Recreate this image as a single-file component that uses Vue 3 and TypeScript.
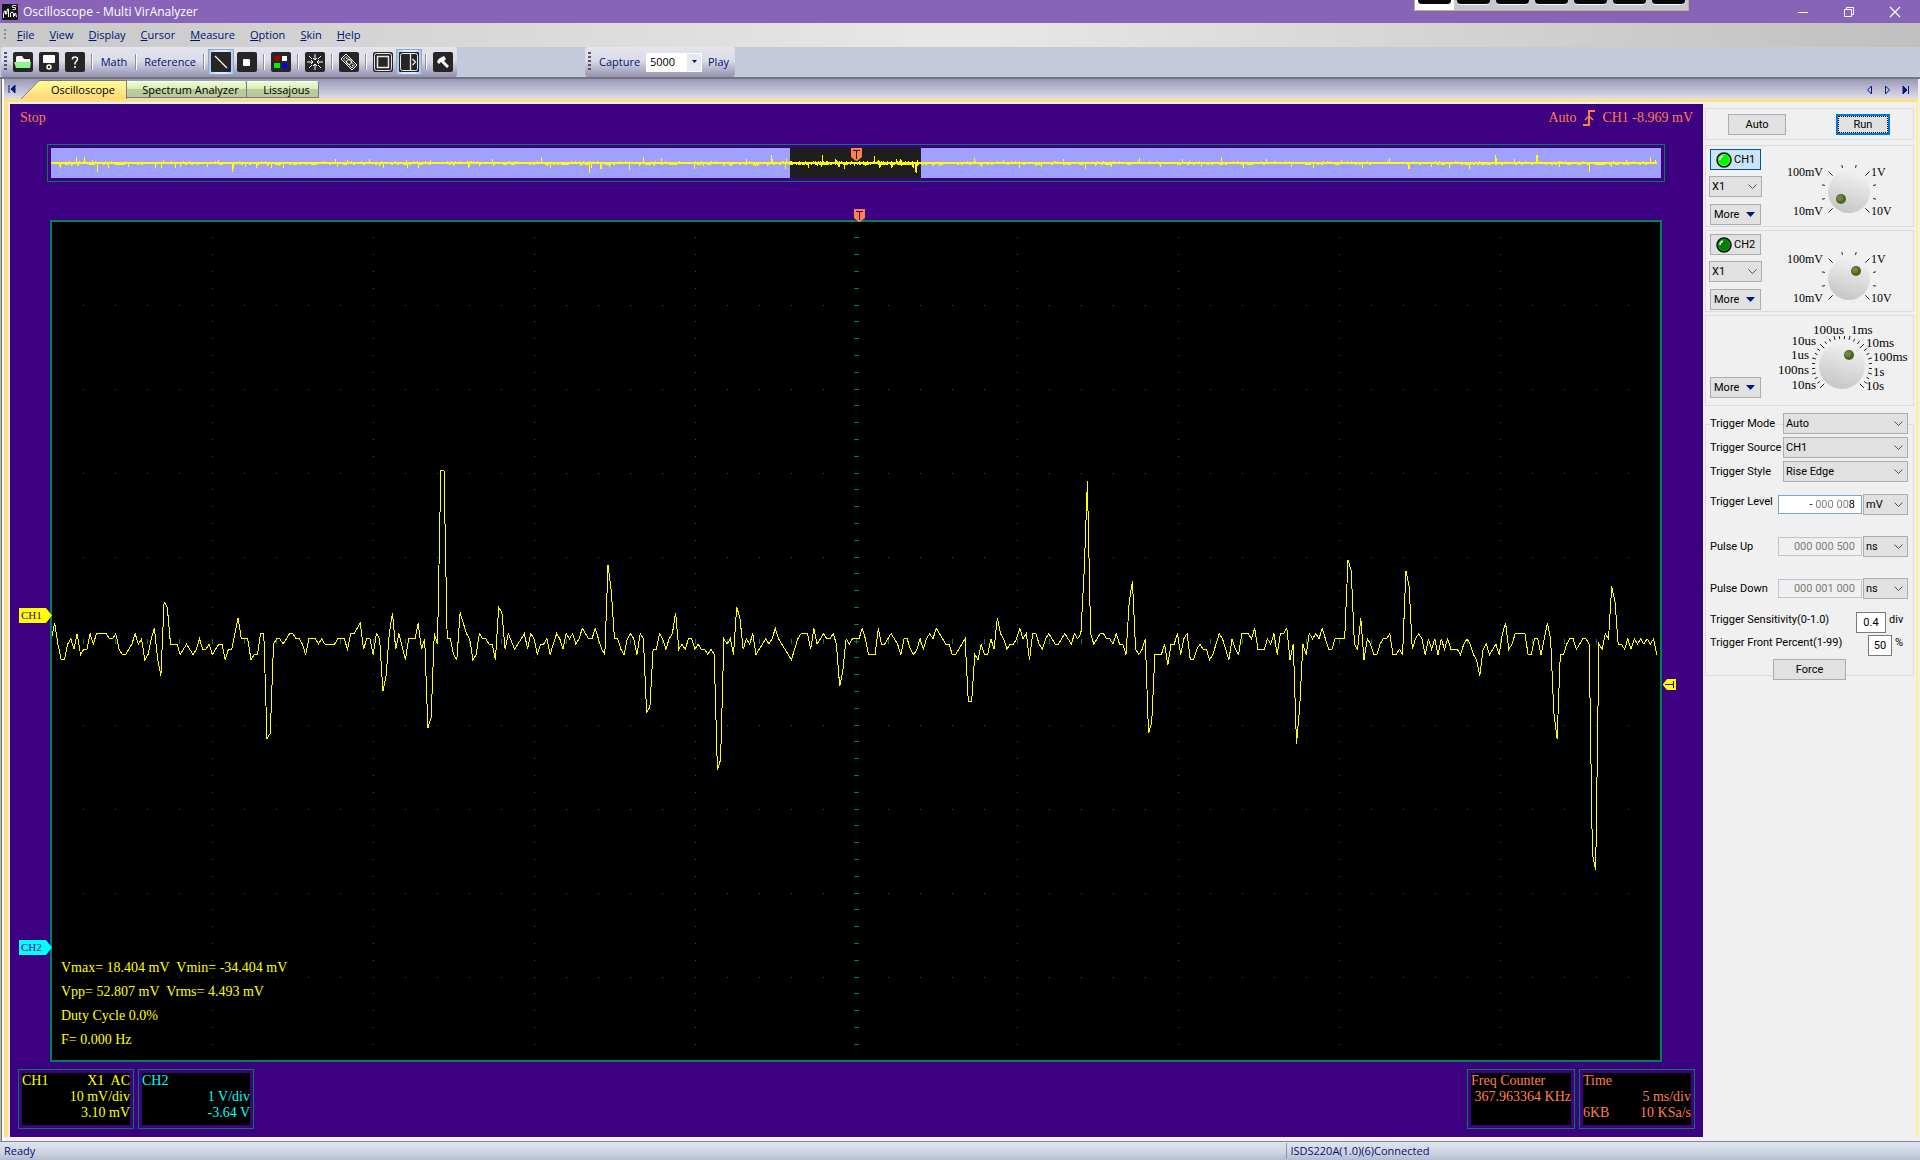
<script setup lang="ts">
import { ref } from 'vue'

const menus = ['File', 'View', 'Display', 'Cursor', 'Measure', 'Option', 'Skin', 'Help']
const dockCells = [0, 1, 2, 3, 4, 5, 6]

const capture = ref('5000')
const probe1 = ref('X1')
const probe2 = ref('X1')
const triggerMode = ref('Auto')
const triggerSource = ref('CH1')
const triggerStyle = ref('Rise Edge')
const triggerLevel = ref('- 000 008')
const levelUnit = ref('mV')
const pulseUp = ref('000 000 500')
const pulseUpUnit = ref('ns')
const pulseDown = ref('000 001 000')
const pulseDownUnit = ref('ns')
const sensitivity = ref('0.4')
const frontPercent = ref('50')

// Captured samples: "index,level" pairs, the level counted in ADC steps from the rest line.
const samples = `0,0 1,3 2,-1 3,-4 4,-4 5,-1 6,0 7,-2 8,1 9,-3 10,-2 11,-2 12,1 13,-1 14,1 17,1 18,0 19,0 20,1 21,-2 22,-3 23,-3
24,-2 25,-1 26,1 27,-1 28,0 29,-4 30,-3 31,0 32,2 33,-4 34,-7 35,7 36,6 37,-1 39,-1 40,-3 42,-1 44,-3 45,-2 46,0 47,-2 48,-2
49,-1 50,-3 52,-1 53,-1 54,-4 55,-2 56,-2 57,1 58,4 59,0 61,0 62,-4 63,-3 64,-3 65,1 66,1 67,-19 68,-18 69,-1 70,0 71,0
72,-1 74,1 75,1 76,0 77,0 78,-1 79,-3 80,0 82,0 83,-1 84,0 85,-1 88,-1 89,0 91,0 92,-2 93,1 94,1 96,3 97,-2 98,0 99,0
100,-3 101,1 102,0 103,-10 104,-7 105,1 106,5 107,-2 108,1 110,-4 111,0 113,0 114,3 115,-2 116,0 117,-17 118,-15 119,1
120,-1 121,32 122,32 123,0 124,0 125,-3 126,-4 127,5 129,1 130,0 131,-4 132,-3 133,1 134,0 135,0 136,-1 137,-1 138,-4 139,6
140,5 141,-2 142,1 144,-2 147,1 148,-2 149,1 150,0 151,-3 152,-1 153,-1 154,0 155,-3 157,1 158,0 159,-2 160,1 161,0 162,1
163,-1 164,0 165,2 167,0 168,0 169,2 171,-2 172,-3 173,14 174,9 175,0 176,0 177,-2 178,-3 179,0 180,1 181,0 182,-3 183,1
184,0 185,-14 186,-13 187,-2 188,-2 189,1 190,0 191,-2 192,0 193,1 194,5 195,-2 196,-1 197,-2 198,0 199,0 200,-2 201,-1
202,-2 203,-2 204,-3 205,-2 206,-3 207,-25 208,-23 209,0 210,-1 211,0 212,-3 213,6 214,4 215,-2 216,0 217,-1 218,1 219,-3
220,-2 222,0 223,-1 224,0 225,2 226,0 227,-1 228,-2 230,-4 231,-2 232,0 233,1 235,1 236,-2 237,2 238,-1 240,1 241,0 242,0
243,1 244,-1 245,-9 246,-6 247,0 248,-1 249,0 251,0 252,2 253,0 254,-3 256,-3 257,2 258,-1 259,-1 260,0 261,1 263,-1 264,-3
265,0 266,0 267,-2 268,-3 269,-2 270,0 271,-2 272,0 273,1 274,0 275,2 277,0 278,-1 279,-1 280,-3 281,-3 282,-2 284,0
285,-12 286,-12 287,-3 288,-4 289,-1 290,-3 291,-3 292,0 293,-2 294,4 295,1 296,0 297,-2 298,-1 299,-1 300,0 301,2 302,0
303,1 304,-4 305,1 306,1 307,-1 308,-2 309,0 310,1 312,-1 313,-1 315,1 317,-1 318,1 319,0 320,1 321,13 322,30 323,1 324,-1
326,1 327,1 328,0 329,0 330,-1 331,1 332,-1 333,-1 334,-3 335,7 336,11 337,-2 338,-3 339,-2 340,0 341,-18 342,-16 343,-3
345,-3 346,-1 347,-5 348,-1 349,-1 350,1 351,-3 352,0 353,1 354,-4 355,-4 356,-2 357,-1 358,-2 359,-2 360,-4 361,-3 362,-1
363,1 364,0 366,-4 367,0 368,-2 369,-3 370,1 372,1 373,0 374,2 375,-2 377,-2 378,0 379,-1 380,1 381,-3 382,1 383,1 384,2
385,-4 386,-1 387,-20 388,-13 389,-1 390,-3 391,1 392,0 393,1 394,0 395,2 396,0 397,-2 398,-2 399,0 402,0 403,15 404,13
405,-1 406,-2 407,4 408,-4 409,0 410,-1 411,-3 412,-3 413,-1 414,0 415,0 416,1 417,-3 418,-3 419,-2 420,-3 421,13 422,10
423,-2 424,0 425,1 426,0 427,-3 428,0 429,-2 430,0 431,-3 432,0 433,-2 434,0 435,-2 437,-2 438,-3 439,-1 440,0 441,-1
442,-3 443,-4 444,-7 445,-2 446,-1 447,-3 449,-1 450,-3 451,1 452,3 453,-2 454,-1 455,1 458,1 459,-3 460,-3 461,0 462,0
463,-3 464,0 465,3 466,0 467,-14 468,-19 469,-3 470,-3 471,-1 472,0 473,0 474,-2 476,0 477,0 478,-1 479,-41 480,-44 481,-1
482,-2 483,1 484,0 485,10 486,7 487,-1 488,-1 489,-2 490,0 491,-2 492,0 493,-1 494,0 495,-1 496,0 497,-1 498,0 499,-3`
  .split(/\s+/)
  .map((pair) => pair.split(',').map(Number) as [number, number])

const tracePoints = samples
  .map(([i, level]) => `${(i * 3.217 - 0.5).toFixed(1)},${(416.8 - level * 5.25).toFixed(1)}`)
  .join(' ')

// Graticule: ten by ten divisions, five minor marks in each.
function buildGrid() {
  let dots = ''
  let ticks = ''
  for (let col = 1; col < 10; col++) {
    for (let n = 1; n < 50; n++) {
      const x = 161 * col - 1
      const y = Math.floor(n * 16.8) - 1
      if (col === 5) ticks += `M${x - 2} ${y}h5v1h-5z`
      else dots += `M${x} ${y}h1v1h-1z`
    }
  }
  for (let row = 1; row < 10; row++) {
    for (let n = 1; n < 50; n++) {
      const x = Math.floor(n * 32.2) - 1
      const y = 84 * row - 1
      if (row === 5) ticks += `M${x} ${y - 2}h1v5h-1z`
      else dots += `M${x} ${y}h1v1h-1z`
    }
  }
  return { dots, ticks }
}
const grid = buildGrid()

// Whole-memory overview: peaks outside the window, as [x, height]; negative goes down.
const peaks: [number, number][] = [
  [9, -4], [25, 5], [33, 5], [41, 2], [46, -8], [57, -4], [77, -3], [104, -4], [110, -4], [112, 2], [124, -4], [129, -3],
  [156, -3], [167, 2], [181, -8], [182, -5], [194, -3], [205, -4], [220, -4], [232, -4], [284, 3], [286, -3], [296, 2],
  [318, 3], [332, -4], [355, 2], [356, -4], [367, -4], [379, 2], [417, -4], [418, -3], [441, 3], [490, 5], [499, -4], [529, -2],
  [538, -9], [540, -4], [549, -5], [550, -5], [558, -3], [578, -6], [592, 5], [603, -2], [610, 4], [643, -5], [652, -2], [695, 3],
  [704, -2], [720, 7], [721, 3], [734, -5], [735, 3], [881, -2], [923, 4], [930, -3], [952, 2], [968, -4], [990, -3], [1012, 3],
  [1034, -5], [1060, -3], [1088, 4], [1109, -3], [1131, 3], [1150, -3], [1170, 5], [1192, -4], [1215, 3], [1240, -3], [1262, -4],
  [1290, 2], [1311, -4], [1338, 4], [1357, -5], [1358, -5], [1380, -3], [1398, -4], [1418, -5], [1444, 7], [1445, 4], [1463, 3],
  [1485, 7], [1486, 7], [1508, -3], [1538, -8], [1560, -3], [1575, 2], [1599, 5], [1604, 2],
]

function buildOverview() {
  let path = 'M0 14h1606v2h-1606z'
  let seed = 7
  for (let x = 2; x < 1604; x += 2) {
    seed = (seed * 1103515245 + 12345) % 2147483648
    const r = seed / 2147483648
    const w = r < 0.5 ? 1 : 2
    if (r < 0.14) path += `M${x} 13h${w}v1h-${w}z`
    else if (r > 0.72) path += `M${x} 16h${w}v1h-${w}z`
    if (r > 0.96) path += `M${x} 17h1v1h-1z`
  }
  for (const [x, h] of peaks) {
    path += h > 0 ? `M${x} ${14 - h}h1v${h}h-1z` : `M${x} 16h1v${-h}h-1z`
  }
  for (const [i, level] of samples) {
    const h = Math.round(Math.abs(level) / 4.9)
    const x = Math.round(739 + i * 0.262)
    if (h > 0) path += level > 0 ? `M${x} ${14 - h}h1v${h}h-1z` : `M${x} 16h1v${h}h-1z`
  }
  return path
}
const overview = buildOverview()

interface KnobLabel {
  text: string
  x: number
  y: number
  end: boolean
}
interface Knob {
  id: string
  cx: number
  cy: number
  r: number
  dotX: number
  dotY: number
  height: number
  font: number
  ticks: string
  labels: KnobLabel[]
}

function dialTicks(cx: number, cy: number, r: number, step: number, major: number) {
  let path = ''
  let n = 0
  for (let a = -135; a <= 135; a += step, n++) {
    const big = n % major === 0
    const corner = Math.abs(a) === 135 || Math.abs(a) === 45
    const inner = corner ? r + 2 : r + 4
    const outer = big ? r + 8 : r + 7
    const s = Math.sin((a * Math.PI) / 180)
    const c = -Math.cos((a * Math.PI) / 180)
    path += `M${(cx + s * inner).toFixed(1)} ${(cy + c * inner).toFixed(1)}L${(cx + s * outer).toFixed(1)} ${(cy + c * outer).toFixed(1)}`
  }
  return path
}

const voltLabels = (top: number): KnobLabel[] => [
  { text: '100mV', x: 54, y: top, end: true },
  { text: '10mV', x: 54, y: top + 39, end: true },
  { text: '1V', x: 102, y: top, end: false },
  { text: '10V', x: 102, y: top + 39, end: false },
]

const volt1: Knob = {
  id: 'k1', cx: 80, cy: 46, r: 21, dotX: 72, dotY: 53, height: 80, font: 12,
  ticks: dialTicks(80, 46, 21, 30, 3), labels: voltLabels(30),
}
const volt2: Knob = {
  id: 'k2', cx: 80, cy: 48, r: 21, dotX: 87, dotY: 40, height: 80, font: 12,
  ticks: dialTicks(80, 48, 21, 30, 3), labels: voltLabels(32),
}
const timeKnob: Knob = {
  id: 'k3', cx: 73, cy: 50, r: 23, dotX: 80, dotY: 39, height: 89, font: 13,
  ticks: dialTicks(73, 50, 23, 10, 3),
  labels: [
    { text: '10ns', x: 47, y: 73, end: true },
    { text: '100ns', x: 40, y: 58, end: true },
    { text: '1us', x: 40, y: 43, end: true },
    { text: '10us', x: 47, y: 29, end: true },
    { text: '100us', x: 75, y: 18, end: true },
    { text: '1ms', x: 82, y: 18, end: false },
    { text: '10ms', x: 97, y: 31, end: false },
    { text: '100ms', x: 104, y: 45, end: false },
    { text: '1s', x: 104, y: 60, end: false },
    { text: '10s', x: 97, y: 74, end: false },
  ],
}

const channels = [
  { name: 'CH1', on: true, probe: probe1, knob: volt1 },
  { name: 'CH2', on: false, probe: probe2, knob: volt2 },
]
</script>

<template>
  <div class="window">
    <header class="titlebar">
      <svg class="app-icon" width="16" height="16" viewBox="0 0 16 16">
        <rect width="16" height="16" rx="1" fill="#151515" />
        <path d="M1.500 14v-4l1-3h1v3h1l1-5h1v8M8.500 13V9l2-1 1 2v3M12.500 12v-2l1-1 1 4" fill="none" stroke="#fff" />
        <path d="M14.500 1.500h-4v2h3v2h-3" fill="none" stroke="#ddd" />
      </svg>
      <h1>Oscilloscope - Multi VirAnalyzer</h1>
      <div class="dock" aria-hidden="true">
        <span v-for="cell in dockCells" :key="cell" :class="['dock-cell', { lit: cell === 0 }]"><i></i></span>
      </div>
      <div class="win-buttons">
        <button type="button" aria-label="Minimize">
          <svg width="12" height="12" viewBox="0 0 12 12"><path d="M1 6.500h10" stroke="#fff" /></svg>
        </button>
        <button type="button" aria-label="Restore">
          <svg width="12" height="12" viewBox="0 0 12 12" fill="none" stroke="#fff">
            <path d="M1.500 3.500h7v7h-7zM3.500 3.500v-2h7v7h-2" />
          </svg>
        </button>
        <button type="button" aria-label="Close">
          <svg width="12" height="12" viewBox="0 0 12 12"><path d="M1 1l10 10M11 1L1 11" stroke="#fff" stroke-width="1.200" /></svg>
        </button>
      </div>
    </header>

    <nav class="menubar">
      <span class="grip short"></span>
      <button v-for="m in menus" :key="m" type="button"><u>{{ m[0] }}</u>{{ m.slice(1) }}</button>
    </nav>

    <div class="toolbars">
      <div class="toolbar main-tools">
        <span class="grip"></span>
        <button type="button" class="tool" aria-label="Open">
          <svg viewBox="0 0 20 20"><rect class="tile" width="20" height="20" rx="2" />
            <path d="M3 15V5l1-1h5l2 3h6v8z" fill="#fff" /><path d="M1 10h17l-1 6H3z" fill="#8cf58c" /></svg>
        </button>
        <button type="button" class="tool" aria-label="Save">
          <svg viewBox="0 0 20 20"><rect class="tile" width="20" height="20" rx="2" />
            <rect x="4" y="3" width="12" height="8" rx="1" fill="#fff" /><circle cx="10" cy="15" r="2" fill="none" stroke="#fff" stroke-width="1.400" /></svg>
        </button>
        <button type="button" class="tool" aria-label="Help">
          <svg viewBox="0 0 20 20"><rect class="tile" width="20" height="20" rx="2" />
            <path d="M7.500 7.500V6.500Q7.500 5 10 5t2.500 2q0 1-1 2T10 11v1.500M10 14v2" fill="none" stroke="#fff" stroke-width="1.500" /></svg>
        </button>
        <span class="sep"></span>
        <button type="button" class="text-tool math">Math</button>
        <span class="sep"></span>
        <button type="button" class="text-tool reference">Reference</button>
        <span class="sep"></span>
        <button type="button" class="tool checked" aria-label="Line">
          <svg viewBox="0 0 20 20"><rect class="tile" width="20" height="20" rx="1" />
            <path d="M4 4l12 12" stroke="#fff" stroke-width="1.300" /></svg>
        </button>
        <button type="button" class="tool" aria-label="Dot">
          <svg viewBox="0 0 20 20"><rect class="tile" width="20" height="20" rx="2" />
            <rect x="6" y="7" width="7" height="7" rx="1" fill="#fff" /></svg>
        </button>
        <span class="sep"></span>
        <button type="button" class="tool" aria-label="Colors">
          <svg viewBox="0 0 20 20"><rect class="tile" width="20" height="20" rx="2" />
            <rect x="3" y="4" width="6" height="5" fill="#a00000" /><rect x="11" y="4" width="5" height="5" fill="#fff" />
            <rect x="3" y="11" width="6" height="5" fill="#00f000" /><rect x="11" y="11" width="5" height="5" fill="#0000ff" /></svg>
        </button>
        <span class="sep"></span>
        <button type="button" class="tool" aria-label="Center">
          <svg viewBox="0 0 20 20"><rect class="tile" width="20" height="20" rx="2" />
            <path d="M10 2v6M8 6l2 2 2-2M10 18v-6M8 14l2-2 2 2M2 10h6M6 8l2 2-2 2M18 10h-6M14 8l-2 2 2 2M4 4l3 3M16 4l-3 3M4 16l3-3M16 16l-3-3" fill="none" stroke="#fff" /></svg>
        </button>
        <span class="sep"></span>
        <button type="button" class="tool" aria-label="Measure strip">
          <svg viewBox="0 0 20 20"><rect class="tile" width="20" height="20" rx="2" />
            <g fill="none" stroke="#fff"><path d="M7 2l11 11-5 5L2 7z" /><path d="M7 4.500l8.500 8.500-2.500 3L4.500 7z" stroke-width=".8" />
              <circle cx="10" cy="10" r="2.500" /><path d="M7 6l1 1M13 13l1 1" /></g></svg>
        </button>
        <span class="sep"></span>
        <button type="button" class="tool" aria-label="Frame">
          <svg viewBox="0 0 20 20"><rect class="tile" width="20" height="20" rx="2" />
            <g fill="none" stroke="#e8e8e8"><rect x="1.500" y="1.500" width="17" height="17" rx="2" /><rect x="4.500" y="4.500" width="11" height="11" stroke-width="1.500" /></g></svg>
        </button>
        <button type="button" class="tool checked" aria-label="Side panel">
          <svg viewBox="0 0 20 20"><rect class="tile" width="20" height="20" rx="1" />
            <g fill="none" stroke="#e8e8e8"><rect x="1.500" y="1.500" width="17" height="17" rx="2" /><path d="M11.500 2v16M13.500 7l3 3-3 3" stroke-width="1.300" /></g></svg>
        </button>
        <span class="sep"></span>
        <button type="button" class="tool" aria-label="Tools">
          <svg viewBox="0 0 20 20"><rect class="tile" width="20" height="20" rx="2" />
            <path d="M4 10q1-4 7-6l2 3-2 2 5 5-2 2-6-6-2 2z" fill="#fff" /></svg>
        </button>
      </div>
      <div class="toolbar capture-tools">
        <span class="grip"></span>
        <label for="capture">Capture</label>
        <span class="capture-combo">
          <select id="capture" v-model="capture"><option>5000</option></select>
          <span class="drop"><svg width="7" height="4" viewBox="0 0 7 4"><path d="M1 0h5L3.500 3z" fill="#001878" /></svg></span>
        </span>
        <button type="button" class="text-tool">Play</button>
      </div>
    </div>

    <div class="workspace">
      <div class="tabstrip">
        <button type="button" class="nav-first" aria-label="First tab">
          <svg width="8" height="8" viewBox="0 0 8 8"><path d="M1 0v8M7 0L3 4l4 4z" stroke="#001878" fill="#001878" /></svg>
        </button>
        <button type="button" class="tab active">
          <svg viewBox="0 0 106 19" preserveAspectRatio="none" aria-hidden="true">
            <defs><linearGradient id="tabfill" x1="0" y1="0" x2="0" y2="1"><stop offset="0" stop-color="#ffff98" /><stop offset="1" stop-color="#ffd678" /></linearGradient></defs>
            <path d="M0 19L17 1.500 19 .5H105.500V19" fill="url(#tabfill)" stroke="#7a7a80" />
          </svg>
          <span>Oscilloscope</span>
        </button>
        <button type="button" class="tab spectrum">Spectrum Analyzer</button>
        <button type="button" class="tab lissajous">Lissajous</button>
        <div class="tab-nav">
          <button type="button" aria-label="Previous tab"><svg width="8" height="10" viewBox="0 0 8 10"><path d="M5.500 1v8l-4-4z" fill="none" stroke="#001878" /></svg></button>
          <button type="button" aria-label="Next tab"><svg width="8" height="10" viewBox="0 0 8 10"><path d="M1.500 1v8l4-4z" fill="none" stroke="#001878" /></svg></button>
          <button type="button" aria-label="Last tab"><svg width="8" height="10" viewBox="0 0 8 10"><path d="M1 1v8l4-4zM6.500 1v8" fill="#001878" stroke="#001878" /></svg></button>
        </div>
      </div>

      <div class="page">
        <main class="scope">
          <div class="scope-head">
            <span>Stop</span>
            <span class="trigger-info">
              <span>Auto</span>
              <svg width="12" height="16" viewBox="0 0 12 16" fill="none" stroke="#ff7f50" stroke-width="2"><path d="M0 15h6V1h6" /><path d="M2 10l4-4 4 4" stroke-width="1.500" /></svg>
              <span>CH1 -8.969 mV</span>
            </span>
          </div>

          <div class="memory">
            <div class="memory-band">
              <svg viewBox="0 0 1610 30" preserveAspectRatio="none">
                <rect x="739" width="131" height="30" fill="#1e1e1e" />
                <path :d="overview" fill="#ffff00" shape-rendering="crispEdges" />
                <path d="M800 0h11v9l-5 4h-1l-5-4z" fill="#ff7f50" />
                <path d="M802 2.500h7M805.500 2v9" stroke="#1e1e1e" />
              </svg>
            </div>
          </div>

          <div class="stage">
            <div class="left-rail" aria-hidden="true"></div>
            <div class="plot">
              <svg class="plot-canvas" viewBox="0 0 1608 838" preserveAspectRatio="none" shape-rendering="crispEdges">
                <path :d="grid.dots" fill="#007848" />
                <path :d="grid.ticks" fill="#008055" />
                <polyline :points="tracePoints" fill="none" stroke="#ffff00" stroke-width="1" />
              </svg>
              <svg class="top-marker" width="11" height="13" viewBox="0 0 11 13">
                <path d="M0 0h11v9l-5 4h-1L0 9z" fill="#ff7f50" /><path d="M2 2.500h7M5.500 2v9" stroke="#3c0080" />
              </svg>
              <svg class="level-marker" width="13" height="11" viewBox="0 0 13 11">
                <path d="M13 0v11H4L0 6V5l4-5z" fill="#ffff00" /><path d="M10.500 2v7M11 5.500H2" stroke="#3c0080" />
              </svg>
              <span class="tag tag-ch1">CH1</span>
              <span class="tag tag-ch2">CH2</span>
              <div class="readings">
                <p>Vmax= 18.404 mV&nbsp; Vmin= -34.404 mV</p>
                <p>Vpp= 52.807 mV&nbsp; Vrms= 4.493 mV</p>
                <p>Duty Cycle 0.0%</p>
                <p>F= 0.000 Hz</p>
              </div>
            </div>
          </div>

          <div class="infos">
            <div class="info ch1"><div>
              <p><span>CH1</span><span>X1&nbsp; AC</span></p>
              <p class="right">10 mV/div</p>
              <p class="right">3.10 mV</p>
            </div></div>
            <div class="info ch2"><div>
              <p>CH2</p>
              <p class="right">1 V/div</p>
              <p class="right">-3.64 V</p>
            </div></div>
            <div class="info freq"><div>
              <p>Freq Counter</p>
              <p class="right">367.963364 KHz</p>
            </div></div>
            <div class="info time"><div>
              <p>Time</p>
              <p class="right">5 ms/div</p>
              <p><span>6KB</span><span>10 KSa/s</span></p>
            </div></div>
          </div>
        </main>

        <aside class="panel">
          <section class="group run-group">
            <button type="button" class="btn auto">Auto</button>
            <button type="button" class="btn run"><span>Run</span></button>
          </section>

          <section v-for="ch in channels" :key="ch.name" class="group knob-group">
            <div class="stack">
              <button type="button" :class="['btn', 'channel', { on: ch.on }]">
                <svg width="16" height="16" viewBox="0 0 16 16">
                  <circle cx="8" cy="8" r="7" :fill="ch.on ? '#00f400' : '#008000'" stroke="#101010" stroke-width="1.500" />
                  <circle cx="8" cy="8" r="5.500" fill="none" :stroke="ch.on ? '#60ff60' : '#30a030'" stroke-width=".6" />
                  <path d="M4 8q0-3 3-4" fill="none" stroke="#fff" stroke-width="1.500" />
                </svg>
                {{ ch.name }}
              </button>
              <span class="combo probe">
                <select v-model="ch.probe.value" :aria-label="ch.name + ' probe'"><option>X1</option></select>
                <svg width="9" height="6" viewBox="0 0 9 6"><path d="M.5.5l4 4 4-4" fill="none" stroke="#505050" /></svg>
              </span>
              <button type="button" class="btn more">More <svg width="9" height="5" viewBox="0 0 9 5"><path d="M0 0h9L4.500 5z" fill="#001878" /></svg></button>
            </div>
            <svg class="knob" width="140" :height="ch.knob.height" role="img" :aria-label="ch.name + ' volts per division'">
              <defs><linearGradient :id="ch.knob.id" x1="0.700" y1="0" x2="0.400" y2="1"><stop offset="0" stop-color="#f2f2f2" /><stop offset="1" stop-color="#c6c6c6" /></linearGradient></defs>
              <path :d="ch.knob.ticks" stroke="#202020" />
              <circle :cx="ch.knob.cx" :cy="ch.knob.cy" :r="ch.knob.r" :fill="`url(#${ch.knob.id})`" />
              <circle :cx="ch.knob.dotX" :cy="ch.knob.dotY" r="5" fill="#4c6420" /><circle :cx="ch.knob.dotX - 1" :cy="ch.knob.dotY - 1" r="3" fill="#6f8448" />
              <text v-for="l in ch.knob.labels" :key="l.text" :x="l.x" :y="l.y" :font-size="ch.knob.font" :text-anchor="l.end ? 'end' : 'start'">{{ l.text }}</text>
            </svg>
          </section>

          <section class="group knob-group time-group">
            <div class="stack">
              <button type="button" class="btn more">More <svg width="9" height="5" viewBox="0 0 9 5"><path d="M0 0h9L4.500 5z" fill="#001878" /></svg></button>
            </div>
            <svg class="knob" width="140" :height="timeKnob.height" role="img" aria-label="Time per division">
              <defs><linearGradient :id="timeKnob.id" x1="0.700" y1="0" x2="0.400" y2="1"><stop offset="0" stop-color="#f2f2f2" /><stop offset="1" stop-color="#c6c6c6" /></linearGradient></defs>
              <path :d="timeKnob.ticks" stroke="#202020" />
              <circle :cx="timeKnob.cx" :cy="timeKnob.cy" :r="timeKnob.r" :fill="`url(#${timeKnob.id})`" />
              <circle :cx="timeKnob.dotX" :cy="timeKnob.dotY" r="5" fill="#4c6420" /><circle :cx="timeKnob.dotX - 1" :cy="timeKnob.dotY - 1" r="3" fill="#6f8448" />
              <text v-for="l in timeKnob.labels" :key="l.text" :x="l.x" :y="l.y" :font-size="timeKnob.font" :text-anchor="l.end ? 'end' : 'start'">{{ l.text }}</text>
            </svg>
          </section>

          <section class="group trigger-group">
            <div class="row">
              <label for="t-mode">Trigger Mode</label>
              <span class="combo wide"><select id="t-mode" v-model="triggerMode"><option>Auto</option></select>
                <svg width="9" height="6" viewBox="0 0 9 6"><path d="M.5.5l4 4 4-4" fill="none" stroke="#505050" /></svg></span>
            </div>
            <div class="row">
              <label for="t-source">Trigger Source</label>
              <span class="combo wide"><select id="t-source" v-model="triggerSource"><option>CH1</option></select>
                <svg width="9" height="6" viewBox="0 0 9 6"><path d="M.5.5l4 4 4-4" fill="none" stroke="#505050" /></svg></span>
            </div>
            <div class="row">
              <label for="t-style">Trigger Style</label>
              <span class="combo wide"><select id="t-style" v-model="triggerStyle"><option>Rise Edge</option></select>
                <svg width="9" height="6" viewBox="0 0 9 6"><path d="M.5.5l4 4 4-4" fill="none" stroke="#505050" /></svg></span>
            </div>
            <div class="row value-row level-row">
              <label for="t-level">Trigger Level</label>
              <input id="t-level" v-model="triggerLevel" class="num level" type="text" />
              <span class="combo unit"><select v-model="levelUnit" aria-label="Trigger level unit"><option>mV</option></select>
                <svg width="9" height="6" viewBox="0 0 9 6"><path d="M.5.5l4 4 4-4" fill="none" stroke="#505050" /></svg></span>
            </div>
            <div class="row value-row">
              <label for="p-up">Pulse Up</label>
              <input id="p-up" v-model="pulseUp" class="num" type="text" disabled />
              <span class="combo unit"><select v-model="pulseUpUnit" aria-label="Pulse up unit"><option>ns</option></select>
                <svg width="9" height="6" viewBox="0 0 9 6"><path d="M.5.5l4 4 4-4" fill="none" stroke="#505050" /></svg></span>
            </div>
            <div class="row value-row">
              <label for="p-down">Pulse Down</label>
              <input id="p-down" v-model="pulseDown" class="num" type="text" disabled />
              <span class="combo unit"><select v-model="pulseDownUnit" aria-label="Pulse down unit"><option>ns</option></select>
                <svg width="9" height="6" viewBox="0 0 9 6"><path d="M.5.5l4 4 4-4" fill="none" stroke="#505050" /></svg></span>
            </div>
            <div class="row small-row sens-row">
              <label for="t-sens">Trigger Sensitivity(0-1.0)</label>
              <input id="t-sens" v-model="sensitivity" class="sens" type="text" />
              <span class="suffix">div</span>
            </div>
            <div class="row small-row">
              <label for="t-front">Trigger Front Percent(1-99)</label>
              <input id="t-front" v-model="frontPercent" class="front" type="text" />
              <span class="suffix">%</span>
            </div>
            <button type="button" class="btn force">Force</button>
          </section>
        </aside>
      </div>
    </div>

    <footer class="statusbar">
      <span class="ready">Ready</span>
      <span class="device">ISDS220A(1.0)(6)Connected</span>
    </footer>
  </div>
</template>

<style>
body {
  margin: 0;
  background: #f0f0f0;
}
</style>

<style scoped>
* {
  box-sizing: border-box;
}
button,
input,
select {
  font: inherit;
  color: inherit;
  margin: 0;
  padding: 0;
  border: 0;
  background: none;
  border-radius: 0;
  outline: none;
}
p,
h1 {
  margin: 0;
  font-weight: 400;
}
svg {
  display: block;
  flex: none;
}
.window {
  min-height: 100vh;
  display: flex;
  flex-direction: column;
  font-family: "Open Sans", "Noto Sans", sans-serif;
  font-size: 11px;
  line-height: 16px;
  color: #001070;
  background: #f0f0f0;
}

/* title bar */
.titlebar {
  position: relative;
  display: flex;
  align-items: center;
  height: 23px;
  padding-left: 2px;
  background: #8764b8;
  color: #fff;
}
.titlebar h1 {
  margin-left: 5px;
  font-size: 12px;
}
.dock {
  position: absolute;
  top: 0;
  right: 231px;
  display: flex;
  width: 275px;
  height: 11px;
  border: 1px solid #c8b078;
  border-top: 0;
  background: #c4c8d0;
}
.dock-cell {
  flex: 1;
  padding: 0 3px;
}
.dock-cell.lit {
  background: #fff;
}
.dock-cell i {
  display: block;
  height: 5px;
  border-radius: 0 0 4px 4px;
  border-bottom: 1px solid #fff;
  background: #080808;
}
.win-buttons {
  display: flex;
  margin-left: auto;
  padding-right: 2px;
}
.win-buttons button {
  width: 46px;
  height: 22px;
  display: grid;
  place-items: center;
}

/* menu */
.menubar {
  display: flex;
  align-items: center;
  height: 24px;
  padding-left: 4px;
  background: linear-gradient(90deg, #c8c8c8, #e8e8e8 50%, #c0c0c0);
}
.menubar button {
  padding: 0 7px 0 8px;
}
.menubar button:first-of-type {
  margin-left: 3px;
}
.grip {
  width: 3px;
  height: 20px;
  flex: none;
  background: repeating-linear-gradient(#54546c 0 2px, transparent 2px 4px);
}
.grip.short {
  width: 2px;
  height: 12px;
  background: repeating-linear-gradient(#888890 0 2px, transparent 2px 4px);
}

/* toolbars */
.toolbars {
  display: flex;
  height: 30px;
  padding-left: 1px;
  background: #c4cadb;
}
.toolbar {
  display: flex;
  align-items: center;
  padding-left: 3px;
  border-radius: 3px;
  background: linear-gradient(#e4e4ee, #dcdce8 45%, #9490b0);
}
.main-tools {
  width: 456px;
}
.main-tools .grip {
  margin-right: 3px;
}
.capture-tools {
  width: 150px;
  margin-left: 128px;
}
.capture-tools label {
  width: 55px;
  padding-left: 8px;
}
.capture-tools .text-tool {
  margin-left: 6px;
}
.tool {
  width: 26px;
  height: 26px;
  padding: 3px;
}
.tool.checked {
  background: linear-gradient(90deg, #a8c0e0, #d8ecff 30%, #d8ecff 70%, #a8c0e0);
  box-shadow: inset 0 0 0 1px #90a8cc;
}
.tool svg {
  width: 20px;
  height: 20px;
}
.tile {
  fill: #262626;
}
.sep {
  width: 8px;
  height: 16px;
  background: linear-gradient(90deg, transparent 3px, #8c8ca4 3px 4px, #fff 4px 5px, transparent 5px);
}
.text-tool {
  white-space: nowrap;
}
.math {
  width: 36px;
}
.reference {
  width: 60px;
}
.capture-combo {
  position: relative;
  display: flex;
  width: 56px;
  height: 19px;
  background: #fff;
  color: #000;
}
.capture-combo select {
  width: 100%;
  padding-left: 4px;
  appearance: none;
}
.drop {
  position: absolute;
  top: 1px;
  right: 1px;
  width: 14px;
  height: 17px;
  display: grid;
  place-items: center;
  background: #e6e9f2;
  pointer-events: none;
}

/* workspace */
.workspace {
  flex: 1;
  display: flex;
  flex-direction: column;
  padding: 0 2px 0 4px;
  border-top: 2px solid #74747c;
  background: linear-gradient(90deg, #b8b8b8 1px, #6c6c6c 1px 2px, #fff 2px 4px, transparent 4px);
}
.tabstrip {
  display: flex;
  align-items: flex-end;
  height: 20px;
  color: #000;
  background: linear-gradient(#9a98b6, #dedeea);
}
.nav-first {
  width: 17px;
  padding: 0 0 6px 4px;
}
.tab {
  height: 17px;
  margin-bottom: 1px;
  border: 1px solid #7a7a80;
  border-left: 0;
  border-top-color: #f8fff0;
  border-radius: 0 3px 0 0;
  background: linear-gradient(#ecfacc, #dcecb8 45%, #bccc9c 50%, #b8c898);
  padding-left: 8px;
}
.tab.active {
  position: relative;
  width: 106px;
  height: 19px;
  margin-bottom: 0;
  padding: 0 0 0 18px;
  border: 0;
  background: none;
}
.tab.active svg {
  position: absolute;
  inset: 0;
  width: 100%;
  height: 100%;
}
.tab.active span {
  position: relative;
}
.spectrum {
  width: 120px;
}
.lissajous {
  width: 72px;
}
.tab-nav {
  display: flex;
  margin-left: auto;
  padding: 0 3px 4px 0;
}
.tab-nav button {
  width: 18px;
  display: grid;
  justify-content: center;
}
.page {
  flex: 1;
  display: flex;
  margin-bottom: 4px;
  padding-left: 2px;
  border: solid #ffe080;
  border-width: 3px 2px 0 4px;
  border-right-color: #fff090;
}

/* scope */
.scope {
  flex: 1;
  min-width: 0;
  display: flex;
  flex-direction: column;
  margin: 2px 0 0;
  padding: 0 8px 8px;
  background: #3c0080;
  font-family: "Liberation Serif", serif;
  font-size: 14px;
  color: #ff7f50;
}
.scope-head {
  display: flex;
  justify-content: space-between;
  align-items: center;
  height: 28px;
  margin-bottom: 12px;
  padding: 0 2px 0 2px;
}
.trigger-info {
  display: flex;
  align-items: center;
  gap: 7px;
}
.memory {
  margin: 0 30px 0 29px;
  height: 38px;
  padding: 3px;
  border: 1px solid #008055;
}
.memory-band {
  height: 30px;
  background: #a0a0ff;
}
.memory-band svg {
  width: 100%;
  height: 30px;
}
.stage {
  flex: 1;
  display: flex;
  margin: 38px 33px 7px 0;
}
.left-rail {
  width: 32px;
}
.plot {
  position: relative;
  flex: 1;
  display: flex;
  align-items: flex-end;
  min-height: 400px;
  border: 2px solid #008055;
  background: #000;
}
.plot-canvas {
  position: absolute;
  inset: 0;
  width: 100%;
  height: 100%;
}
.top-marker {
  position: absolute;
  top: -13px;
  left: 50%;
  margin-left: -2px;
}
.level-marker {
  position: absolute;
  left: 100%;
  top: 457px;
  margin-left: 3px;
}
.tag {
  position: absolute;
  right: 100%;
  width: 33px;
  height: 15px;
  padding-left: 2px;
  font-size: 11px;
  line-height: 15px;
  color: #3c0080;
  clip-path: polygon(0 0, 27px 0, 100% 50%, 27px 100%, 0 100%);
}
.tag-ch1 {
  top: 386px;
  background: #ffff00;
}
.tag-ch2 {
  top: 718px;
  background: #00ffff;
}
.readings {
  position: relative;
  padding: 0 0 8px 9px;
  line-height: 24px;
  color: #ffff00;
}
.infos {
  display: flex;
  gap: 4px;
}
.info {
  width: 116px;
  height: 60px;
  padding: 3px;
  border: 1px solid #008055;
}
.info > div {
  height: 52px;
  background: #000;
}
.info p {
  display: flex;
  justify-content: space-between;
  white-space: nowrap;
}
.info .right {
  justify-content: flex-end;
}
.ch1 {
  color: #ffff00;
}
.ch2 {
  color: #00ffff;
}
.freq {
  width: 108px;
  margin-left: auto;
}

/* control panel */
.panel {
  width: 213px;
  flex: none;
  padding: 6px 2px 0;
  font-family: Roboto, "Open Sans", sans-serif;
  color: #000;
}
.group {
  display: flex;
  border: 1px solid #dcdcdc;
  margin-bottom: 3px;
}
.btn {
  height: 21px;
  border: 1px solid #adadad;
  background: #e1e1e1;
  line-height: 16px;
}
.run-group {
  height: 32px;
  margin-bottom: 5px;
  padding: 5px 23px 5px 22px;
  justify-content: space-between;
}
.auto {
  width: 58px;
}
.run {
  width: 54px;
  border: 2px solid #0078d7;
}
.run span {
  display: block;
  height: 17px;
  border: 1px dotted #000;
  line-height: 15px;
}
.knob-group {
  height: 82px;
  justify-content: space-between;
}
.stack {
  display: flex;
  flex-direction: column;
  align-items: center;
  width: 59px;
  padding-top: 3px;
  gap: 6px;
}
.channel,
.more {
  display: flex;
  align-items: center;
  width: 51px;
}
.channel {
  gap: 2px;
  padding-left: 5px;
}
.channel.on {
  border-color: #005499;
  background: #cce4f7;
}
.more {
  justify-content: space-between;
  padding: 0 5px 0 3px;
  margin-top: 1px;
}
.time-group {
  height: 91px;
  margin-bottom: 18px;
}
.time-group .stack {
  justify-content: flex-end;
  padding-bottom: 7px;
}
.knob {
  margin-right: 4px;
}
.knob text {
  font-family: "Liberation Serif", serif;
  fill: #000;
}
.combo {
  position: relative;
  display: block;
  height: 21px;
  border: 1px solid #adadad;
  background: #e1e1e1;
}
.combo select {
  display: block;
  width: 100%;
  height: 19px;
  padding-left: 2px;
  appearance: none;
}
.combo svg {
  position: absolute;
  right: 4px;
  top: 7px;
  pointer-events: none;
}
.probe {
  width: 53px;
}
.wide {
  width: 125px;
}
.unit {
  width: 45px;
}
.trigger-group {
  position: relative;
  flex-direction: column;
  padding: 0 5px 0 0;
}
.row {
  display: flex;
  align-items: center;
  justify-content: flex-end;
  margin-bottom: 3px;
}
.row label {
  margin-right: auto;
  padding-left: 4px;
  white-space: nowrap;
}
.row:first-child {
  margin-top: -12px;
}
.row:first-child label {
  margin-left: 4px;
  padding-left: 0;
  background: #f0f0f0;
}
.value-row {
  margin-bottom: 21px;
}
.level-row {
  margin-top: 9px;
}
.level-row label {
  align-self: flex-start;
}
.num {
  width: 84px;
  height: 19px;
  margin-right: 1px;
  padding-right: 6px;
  border: 1px solid #b8c8d4;
  text-align: right;
  color: #7c7c7c;
}
.num.level {
  border-color: #7ea4c8;
  background-image: linear-gradient(90deg, #000 35px, #7c7c7c 35px 70px, #000 70px), linear-gradient(#fff, #fff);
  -webkit-background-clip: text, padding-box;
  background-clip: text, padding-box;
  color: transparent;
}
.small-row {
  margin-bottom: 2px;
  align-items: flex-start;
}
.sens-row {
  margin-top: -8px;
}
.small-row input {
  height: 21px;
  border: 1px solid #7a7a7a;
  background: #fff;
  text-align: center;
}
.sens {
  width: 30px;
}
.front {
  width: 24px;
}
.suffix {
  width: 22px;
  padding-left: 3px;
}
.small-row:nth-of-type(8) .suffix {
  width: 16px;
}
.force {
  width: 73px;
  margin: 1px 0 -5px 67px;
}

/* status bar */
.statusbar {
  display: flex;
  align-items: center;
  height: 19px;
  border-top: 1px solid #8088a0;
  background: linear-gradient(#dfe4ee, #ccd3e2 60%, #b4bccf);
}
.ready {
  width: 67%;
  padding-left: 4px;
}
.device {
  padding-left: 3px;
  border-left: 1px solid #8c94ac;
}
</style>
